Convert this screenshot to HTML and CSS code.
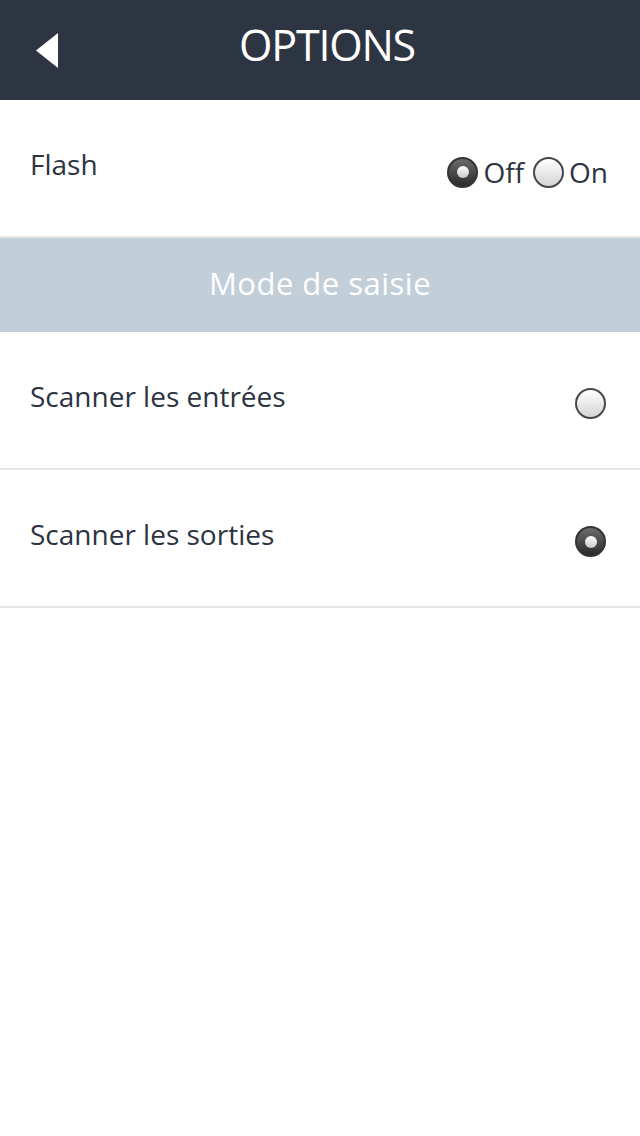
FILE: index.html
```html
<!DOCTYPE html>
<html lang="fr">
<head>
<meta charset="utf-8">
<title>Options</title>
<link rel="stylesheet" href="styles.css">
</head>
<body>
  <header class="topbar">
    <button class="back" aria-label="Retour">
      <svg width="22" height="35" viewBox="0 0 22 35"><polygon points="22,0 22,35 0,17.5" fill="#ffffff"/></svg>
    </button>
    <h1 class="title">OPTIONS</h1>
  </header>
  <main>
    <div class="row">
      <span class="label">Flash</span>
      <div class="choice">
        <span class="radio checked"></span><span class="opt">Off</span>
        <span class="radio spaced"></span><span class="opt">On</span>
      </div>
    </div>
    <div class="section">Mode de saisie</div>
    <div class="row">
      <span class="label">Scanner les entrées</span>
      <span class="radio single"></span>
    </div>
    <div class="row">
      <span class="label">Scanner les sorties</span>
      <span class="radio single checked"></span>
    </div>
  </main>
</body>
</html>
```
FILE: styles.css
```css
html, body {
  margin: 0;
  padding: 0;
  background: #ffffff;
}
body {
  font-family: "Open Sans", "Liberation Sans", sans-serif;
  color: #2d3441;
  width: 640px;
}
.topbar {
  height: 100px;
  background: #2e3542;
  display: flex;
  align-items: flex-start;
}
.back {
  margin: 33px 0 0 36px;
  padding: 0;
  border: 0;
  background: none;
  width: 22px;
  height: 35px;
  display: block;
}
.back svg { display: block; }
.title {
  flex: 1;
  margin: 16px 0 0 0;
  padding-right: 44px;
  text-align: center;
  font-size: 43px;
  line-height: 58px;
  font-weight: 400;
  letter-spacing: -1.2px;
  color: #ffffff;
}
.row {
  height: 136px;
  border-bottom: 2px solid #e6e6e6;
  display: flex;
  justify-content: space-between;
  align-items: flex-start;
  padding: 0 32px 0 30px;
}
.label {
  margin-top: 45px;
  font-size: 28px;
  line-height: 38px;
}
.choice {
  margin-top: 53px;
  display: flex;
  align-items: center;
  height: 38px;
}
.opt {
  font-size: 28px;
  line-height: 38px;
  margin-left: 5px;
}
.radio {
  width: 31px;
  height: 31px;
  box-sizing: border-box;
  border-radius: 50%;
  border: 2px solid #474747;
  background: linear-gradient(#ffffff, #d4d4d4);
  display: flex;
  align-items: center;
  justify-content: center;
  flex: none;
}
.radio.spaced { margin-left: 9px; }
.radio.single {
  margin-top: 56px;
  margin-right: 2px;
}
.radio.checked {
  border-color: #333333;
  background: linear-gradient(#6b6b6b, #2b2b2b);
}
.radio.checked::after {
  content: "";
  width: 12px;
  height: 12px;
  border-radius: 50%;
  background: linear-gradient(#ffffff, #c8c8c8);
}
.section {
  height: 94px;
  background: #c2ced8;
  color: #ffffff;
  display: flex;
  align-items: center;
  justify-content: center;
  font-size: 31px;
  line-height: 40px;
  letter-spacing: 0.5px;
  padding-bottom: 5px;
  box-sizing: border-box;
}
```
